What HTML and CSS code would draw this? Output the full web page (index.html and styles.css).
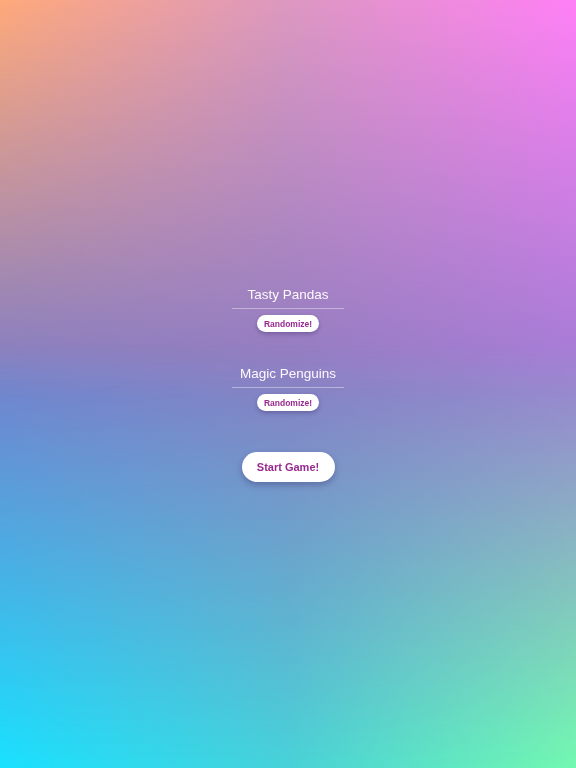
FILE: index.html
```html
<!DOCTYPE html>
<html lang="en">
<head>
    <meta charset="UTF-8">
    <title>Team Setup</title>
    <link rel="stylesheet" href="styles.css">
</head>
<body>

<div id="app">
    <div class="teams">
        <div class="team">
            <input class="teamName" type="text" value="Tasty Pandas">
            <button class="randomize">Randomize!</button>
        </div>
        <div class="team">
            <input class="teamName" type="text" value="Magic Penguins">
            <button class="randomize">Randomize!</button>
        </div>
    </div>
    <button class="startGame">Start Game!</button>
</div>

</body>
</html>
```

FILE: styles.css
```css
html, body {
    margin: 0;
    padding: 0;
    height: 100%;
}

body {
    font-family: "Liberation Sans", Arial, sans-serif;
    background: linear-gradient(to right, #7b7bc8, #8c7ac2 50%, #9c7cd2);
    position: relative;
    overflow: hidden;
}

/*上下两层渐变，用遮罩淡出到中间*/
body::before,
body::after {
    content: "";
    position: fixed;
    top: 0;
    left: 0;
    right: 0;
    bottom: 0;
    z-index: 0;
}

body::before {
    background: linear-gradient(to right, #ffa97a, #dc98c0 50%, #ff80f5);
    -webkit-mask-image: linear-gradient(to bottom, #000 0%, transparent 52%);
    mask-image: linear-gradient(to bottom, #000 0%, transparent 52%);
}

body::after {
    background: linear-gradient(to right, #19e1ff, #47d2d8 50%, #72f9b0);
    -webkit-mask-image: linear-gradient(to top, #000 0%, transparent 55%);
    mask-image: linear-gradient(to top, #000 0%, transparent 55%);
}

#app {
    position: relative;
    z-index: 1;
    box-sizing: border-box;
    min-height: 100vh;
    padding-bottom: 3px;
    display: flex;
    flex-direction: column;
    align-items: center;
    justify-content: center;
}

.teams {
    display: flex;
    flex-direction: column;
    align-items: center;
    gap: 30px;
}

.team {
    display: flex;
    flex-direction: column;
    align-items: center;
    gap: 6px;
}

.teamName {
    width: 112px;
    height: 22px;
    padding: 0 0 3px 0;
    margin: 0;
    border: none;
    border-bottom: 1px solid rgba(255, 255, 255, 0.4);
    background: transparent;
    color: #fdf9fd;
    font-family: "Liberation Sans", Arial, sans-serif;
    font-size: 13.5px;
    text-align: center;
    outline: none;
}

.randomize {
    width: 62px;
    height: 17px;
    padding: 0;
    border: none;
    border-radius: 9px;
    background: #fff;
    color: #97298f;
    font-family: "Liberation Sans", Arial, sans-serif;
    font-weight: bold;
    font-size: 8.5px;
    box-shadow: 0 2px 4px rgba(40, 20, 80, 0.3);
}

.startGame {
    margin-top: 41px;
    width: 93px;
    height: 30px;
    padding: 0;
    border: none;
    border-radius: 15px;
    background: #fff;
    color: #97298f;
    font-family: "Liberation Sans", Arial, sans-serif;
    font-weight: bold;
    font-size: 11px;
    box-shadow: 0 3px 6px rgba(40, 20, 80, 0.3);
}
```
